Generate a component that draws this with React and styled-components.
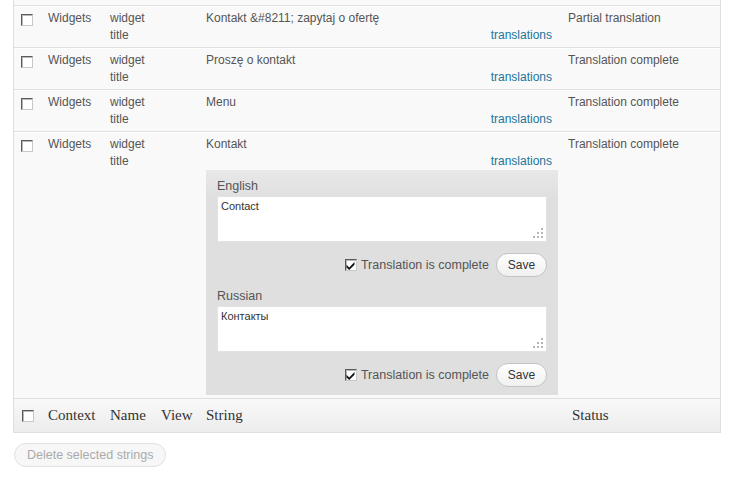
import React from "react";
import styled, { createGlobalStyle } from "styled-components";

const Global = createGlobalStyle`
  html, body { margin: 0; padding: 0; background: #fff; }
  body { font-family: "Liberation Sans", Arial, sans-serif; }
`;

const COLS = "27px 62px 51px 45px 362px 1fr";

const Page = styled.div`
  width: 733px;
  height: 483px;
  overflow: hidden;
`;

const Table = styled.div`
  margin-left: 13px;
  width: 708px;
  box-sizing: border-box;
  border: 1px solid #dfdfdf;
  border-top: none;
  background: #f9f9f9;
`;

const Tail = styled.div`
  height: 5px;
  border-bottom: 1px solid #dfdfdf;
`;

const Row = styled.div`
  display: grid;
  grid-template-columns: ${COLS};
  border-top: 1px solid #fff;
  border-bottom: 1px solid #dfdfdf;
`;

const Cell = styled.div`
  padding: 3px ${(p) => p.$pr ?? 7}px 3px ${(p) => p.$pl ?? 7}px;
  font-size: 12px;
  line-height: 17px;
  color: #555;
  min-width: 0;
`;

const CheckCell = styled.div`
  padding: ${(p) => (p.$foot ? "0 0 0 8px" : "7px 0 0 7px")};
  display: flex;
  align-items: ${(p) => (p.$foot ? "center" : "flex-start")};
`;

const Box = styled.span`
  display: inline-flex;
  align-items: center;
  justify-content: center;
  width: 12px;
  height: 12px;
  box-sizing: border-box;
  background: #fff;
  border: 1px solid;
  border-color: #5a5a5a #c8c8c8 #c8c8c8 #5a5a5a;
  box-shadow: inset 1px 1px 0 #b8b8b8;
  flex: none;
`;

const Link = styled.a`
  display: block;
  text-align: right;
  padding-right: 6px;
  color: #21759b;
  text-decoration: none;
`;

const Panel = styled.div`
  background: linear-gradient(to bottom, #e8e8e8, #dfdfdf 30px);
  padding: 8px 11px 8px;
`;

const Group = styled.div`
  & + & {
    margin-top: 11px;
  }
`;

const Label = styled.div`
  font-size: 12.5px;
  line-height: 17px;
  color: #555;
`;

const AreaWrap = styled.div`
  position: relative;
  margin-top: 1px;
`;

const Area = styled.textarea`
  display: block;
  width: 100%;
  height: 46px;
  box-sizing: border-box;
  margin: 0;
  border: 1px solid #e2e2e2;
  background: #fff;
  padding: 3px;
  resize: none;
  font-family: "Liberation Sans", Arial, sans-serif;
  font-size: 11px;
  line-height: 13px;
  color: #333;
  outline: none;
`;

const Grip = styled.svg`
  position: absolute;
  right: 3px;
  bottom: 3px;
`;

const Actions = styled.div`
  display: flex;
  justify-content: flex-end;
  align-items: center;
  margin-top: 11px;
  height: 24px;
`;

const CheckLabel = styled.label`
  display: flex;
  align-items: center;
  gap: 4px;
  font-size: 12.5px;
  color: #555;
  margin-right: 7px;
`;

const SaveButton = styled.button`
  width: 51px;
  height: 24px;
  box-sizing: border-box;
  border: 1px solid #c4c4c4;
  border-radius: 12px;
  background: linear-gradient(to bottom, #ffffff, #f0f0f0);
  font-family: "Liberation Sans", Arial, sans-serif;
  font-size: 12px;
  color: #333;
  padding: 0;
`;

const Foot = styled.div`
  display: grid;
  grid-template-columns: ${COLS};
  height: 33px;
  align-items: center;
  background: linear-gradient(to bottom, #f9f9f9, #ececec);
`;

const Th = styled.div`
  padding-left: ${(p) => p.$pl ?? 7}px;
  font-family: "Liberation Serif", "Times New Roman", serif;
  font-size: 15px;
  color: #333;
`;

const DeleteButton = styled.button`
  margin: 10px 0 0 14px;
  height: 24px;
  box-sizing: border-box;
  padding: 0 12px;
  border: 1px solid #e0e0e0;
  border-radius: 12px;
  background: #f7f7f7;
  font-family: "Liberation Sans", Arial, sans-serif;
  font-size: 12.5px;
  color: #aaa;
`;

function Checkbox({ checked }) {
  return (
    <Box>
      {checked && (
        <svg width="9" height="9" viewBox="0 0 9 9">
          <path d="M0.5 3.8 L3.2 6.4 L8.5 1 L8.5 3.8 L3.2 9 L0.5 6.4 Z" fill="#111" />
        </svg>
      )}
    </Box>
  );
}

function Translation({ lang, value }) {
  return (
    <Group>
      <Label>{lang}</Label>
      <AreaWrap>
        <Area defaultValue={value} />
        <Grip width="11" height="11" viewBox="0 0 11 11">
          {[
            [9, 1],
            [5, 5],
            [9, 5],
            [1, 9],
            [5, 9],
            [9, 9],
          ].map(([x, y]) => (
            <rect key={`${x}-${y}`} x={x - 1} y={y - 1} width="2" height="2" fill="#b5b5b5" />
          ))}
        </Grip>
      </AreaWrap>
      <Actions>
        <CheckLabel>
          <Checkbox checked />
          Translation is complete
        </CheckLabel>
        <SaveButton>Save</SaveButton>
      </Actions>
    </Group>
  );
}

const rows = [
  { str: "Kontakt &#8211; zapytaj o ofertę", status: "Partial translation" },
  { str: "Proszę o kontakt", status: "Translation complete" },
  { str: "Menu", status: "Translation complete" },
  { str: "Kontakt", status: "Translation complete", open: true },
];

export default function App() {
  return (
    <Page>
      <Global />
      <Table>
        <Tail />
        {rows.map((r) => (
          <Row key={r.str}>
            <CheckCell>
              <Checkbox />
            </CheckCell>
            <Cell>Widgets</Cell>
            <Cell>widget title</Cell>
            <Cell />
            <Cell $pr={3}>
              <div>{r.str}</div>
              <Link href="#">translations</Link>
              {r.open && (
                <Panel>
                  <Translation lang="English" value="Contact" />
                  <Translation lang="Russian" value="Контакты" />
                </Panel>
              )}
            </Cell>
            <Cell>{r.status}</Cell>
          </Row>
        ))}
        <Foot>
          <CheckCell $foot>
            <Checkbox />
          </CheckCell>
          <Th>Context</Th>
          <Th>Name</Th>
          <Th>View</Th>
          <Th>String</Th>
          <Th $pl={11}>Status</Th>
        </Foot>
      </Table>
      <DeleteButton disabled>Delete selected strings</DeleteButton>
    </Page>
  );
}
